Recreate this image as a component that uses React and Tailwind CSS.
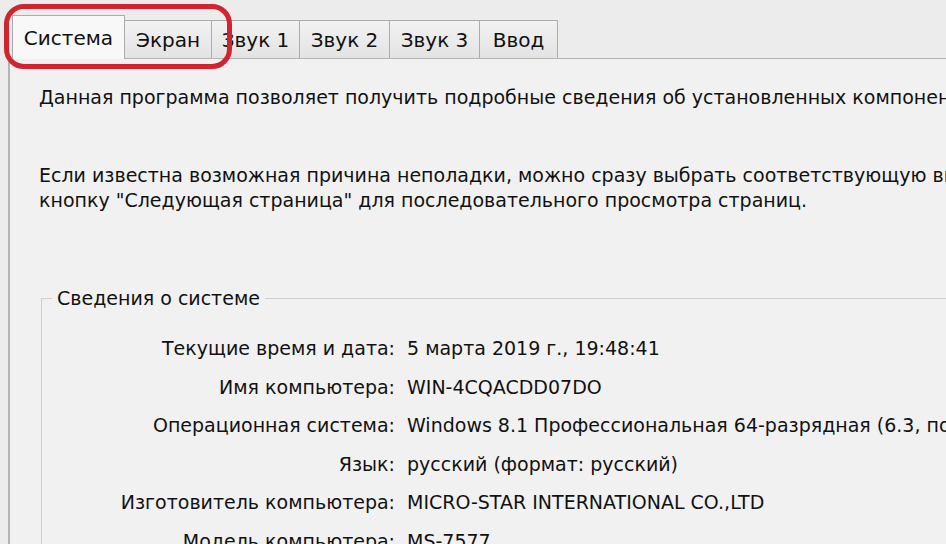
const tabs = ["Экран", "Звук 1", "Звук 2", "Звук 3", "Ввод"];
const tabWidths = ["w-[87px]", "w-[88px]", "w-[90px]", "w-[90px]", "w-[78px]"];

const rows = [
  ["Текущие время и дата:", "5 марта 2019 г., 19:48:41"],
  ["Имя компьютера:", "WIN-4CQACDD07DO"],
  ["Операционная система:", "Windows 8.1 Профессиональная 64-разрядная (6.3, построение 9600)"],
  ["Язык:", "русский (формат: русский)"],
  ["Изготовитель компьютера:", "MICRO-STAR INTERNATIONAL CO.,LTD"],
  ["Модель компьютера:", "MS-7577"],
];

export default function App() {
  return (
    <div className="relative w-[946px] h-[544px] overflow-hidden bg-[#ececec] text-[#111] font-['DejaVu_Sans','Noto_Sans',sans-serif]">
      {/* tab strip */}
      <div className="flex items-end h-[58px] pl-[12px]">
        <div className="relative z-10 flex items-center justify-center w-[113px] h-[44px] -mb-px bg-[#f8f8f8] border border-b-0 border-[#acacac] text-[20px]">
          Система
        </div>
        {tabs.map((t, i) => (
          <div
            key={t}
            className={`flex items-center justify-center ${tabWidths[i]} h-[38px] bg-gradient-to-b from-[#f2f2f2] to-[#e3e3e3] border border-l-0 border-b-0 border-[#acacac] text-[20px]`}
          >
            {t}
          </div>
        ))}
      </div>

      {/* tab page */}
      <div className="ml-[8px] h-[500px] border-l-2 border-t border-[#b4b4b4] bg-[#f1f1f1] pl-[29px] pt-[26px] text-[19px] leading-[25px] whitespace-nowrap">
        <p>Данная программа позволяет получить подробные сведения об установленных компонентах DirectX и драйверах.</p>
        <p className="mt-[53px]">Если известна возможная причина неполадки, можно сразу выбрать соответствующую вкладку. В противном случае используйте</p>
        <p>кнопку "Следующая страница" для последовательного просмотра страниц.</p>

        {/* group box */}
        <div className="relative mt-[85px] ml-[2px] border-l border-t border-[#d0d0d0] h-[300px] pt-[37px]">
          <div className="absolute -top-[13px] left-[10px] px-[5px] bg-[#f1f1f1]">Сведения о системе</div>
          <div className="flex flex-col gap-[13.6px]">
            {rows.map(([k, v]) => (
              <div key={k} className="flex">
                <div className="w-[353px] shrink-0 text-right">{k}</div>
                <div className="pl-[12px]">{v}</div>
              </div>
            ))}
          </div>
        </div>
      </div>

      {/* red highlight around the first two tabs */}
      <div className="absolute left-[4px] top-[4px] w-[228px] h-[65px] rounded-[20px] border-[5px] border-[#d3232e]" />
    </div>
  );
}
